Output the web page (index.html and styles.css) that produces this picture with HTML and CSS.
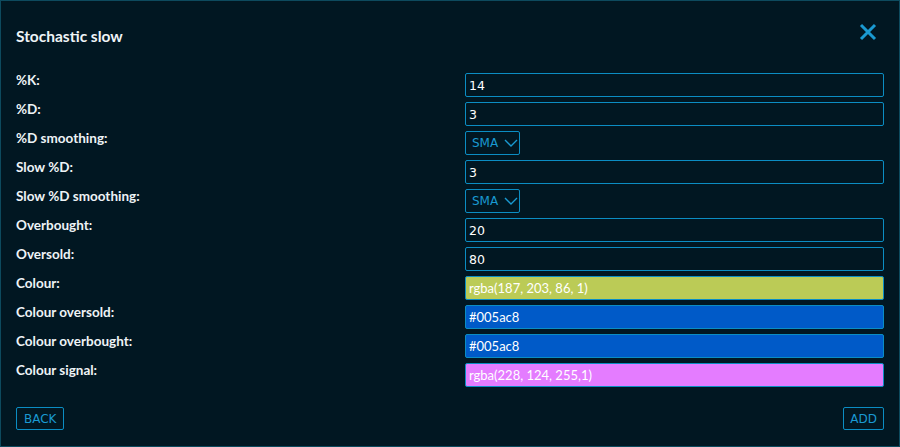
FILE: index.html
```html
<!DOCTYPE html>
<html lang="en">
<head>
  <meta charset="UTF-8">
  <title>Stochastic slow</title>
  <link rel="stylesheet" href="styles.css">
</head>
<body>

  <div class="dialog">
    <!-- Header -->
    <div class="dialog-header">
      <h2 class="dialog-title">Stochastic slow</h2>
      <button class="close-btn" aria-label="Close">
        <svg width="18" height="18" viewBox="0 0 18 18">
          <path d="M2 2 L16 16 M16 2 L2 16" stroke="#1a9ad2" stroke-width="3" stroke-linecap="butt"/>
        </svg>
      </button>
    </div>

    <!-- Settings -->
    <div class="settings">
      <label class="setting-label">%K:</label>
      <input class="field" type="text" value="14">

      <label class="setting-label">%D:</label>
      <input class="field" type="text" value="3">

      <label class="setting-label">%D smoothing:</label>
      <div class="select">SMA
        <svg width="14" height="10" viewBox="0 0 14 10"><polyline points="1,2 7,8 13,2" fill="none" stroke="#1a9ad2" stroke-width="1.4"/></svg>
      </div>

      <label class="setting-label">Slow %D:</label>
      <input class="field" type="text" value="3">

      <label class="setting-label">Slow %D smoothing:</label>
      <div class="select">SMA
        <svg width="14" height="10" viewBox="0 0 14 10"><polyline points="1,2 7,8 13,2" fill="none" stroke="#1a9ad2" stroke-width="1.4"/></svg>
      </div>

      <label class="setting-label">Overbought:</label>
      <input class="field" type="text" value="20">

      <label class="setting-label">Oversold:</label>
      <input class="field" type="text" value="80">

      <label class="setting-label">Colour:</label>
      <div class="swatch" style="background-color: rgba(187, 203, 86, 1)">rgba(187, 203, 86, 1)</div>

      <label class="setting-label">Colour oversold:</label>
      <div class="swatch" style="background-color: #005ac8">#005ac8</div>

      <label class="setting-label">Colour overbought:</label>
      <div class="swatch" style="background-color: #005ac8">#005ac8</div>

      <label class="setting-label">Colour signal:</label>
      <div class="swatch" style="background-color: rgba(228, 124, 255, 1)">rgba(228, 124, 255,1)</div>
    </div>

    <!-- Footer -->
    <div class="dialog-footer">
      <button class="outline-btn">BACK</button>
      <button class="outline-btn">ADD</button>
    </div>
  </div>

</body>
</html>
```

FILE: styles.css
```css
/* General Styles */
body {
  margin: 0;
  padding: 0;
  background-color: #011722;
  font-family: Lato, "Open Sans", sans-serif;
  color: #eef3f6;
}

.dialog {
  box-sizing: border-box;
  height: 447px;
  border: 1px solid #0d4a5e;
  padding: 22px 15px 0 15px;
  background-color: #011722;
}

/* Header */
.dialog-header {
  display: flex;
  justify-content: space-between;
  align-items: flex-start;
  height: 50px;
}

.dialog-title {
  margin: 3px 0 0 0;
  font-size: 15.5px;
  line-height: 20px;
  font-weight: bold;
  color: #eef3f6;
}

.close-btn {
  background: none;
  border: none;
  padding: 0;
  margin: 0 7px 0 0;
  cursor: pointer;
  line-height: 0;
}

/* Settings grid */
.settings {
  display: grid;
  grid-template-columns: 1fr 419px;
  row-gap: 5px;
}

.setting-label {
  font-size: 13.5px;
  font-weight: bold;
  line-height: 15px;
  padding-top: 0;
}

.field,
.swatch {
  box-sizing: border-box;
  height: 24px;
  width: 100%;
  margin: 0;
  border: 1px solid #0b8dc3;
  border-radius: 2px;
  background-color: #011722;
  color: #ffffff;
  padding: 0 3px;
}

.field {
  font-family: "DejaVu Sans", sans-serif;
  font-size: 12.5px;
  outline: none;
}

.swatch {
  display: flex;
  align-items: center;
  font-family: Lato, sans-serif;
  font-size: 13px;
}

.select {
  box-sizing: border-box;
  width: 55px;
  height: 24px;
  display: flex;
  align-items: center;
  gap: 6px;
  padding: 0 0 0 6px;
  border: 1px solid #0b8dc3;
  border-radius: 2px;
  font-family: "DejaVu Sans", sans-serif;
  font-size: 12px;
  color: #1a9ad2;
}

/* Footer */
.dialog-footer {
  display: flex;
  justify-content: space-between;
  margin-top: 20px;
}

.outline-btn {
  height: 23px;
  padding: 0 7px;
  background: none;
  border: 1px solid #0b8dc3;
  border-radius: 2px;
  font-family: "DejaVu Sans", sans-serif;
  font-size: 12px;
  color: #1a9ad2;
  cursor: pointer;
}

.outline-btn + .outline-btn {
  padding: 0 6px;
}
```
